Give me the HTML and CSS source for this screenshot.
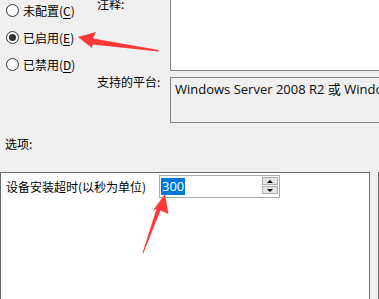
FILE: index.html
```html
<!DOCTYPE html>
<html lang="zh-CN">
<head>
<meta charset="utf-8">
<title>设备安装超时</title>
<link rel="stylesheet" href="styles.css">
</head>
<body>
<div class="page">
  <div class="top">
    <div class="radios">
      <div class="radio"><span class="dot"></span><span>未配置(<u>C</u>)</span></div>
      <div class="radio"><span class="dot checked"></span><span>已启用(<u>E</u>)</span></div>
      <div class="radio"><span class="dot"></span><span>已禁用(<u>D</u>)</span></div>
    </div>
    <div class="fields">
      <div class="label label-comment">注释:</div>
      <div class="box comment"></div>
      <div class="label label-platform">支持的平台:</div>
      <div class="box platform">Windows Server 2008 R2 或 Windows 7</div>
    </div>
  </div>
  <div class="options-label">选项:</div>
  <div class="bottom">
    <div class="panel">
      <div class="row">
        <span class="row-label">设备安装超时(以秒为单位)</span>
        <div class="spin-input">
          <span class="sel">300</span>
          <div class="spinner">
            <div class="btn"><span class="tri up"></span></div>
            <div class="btn"><span class="tri down"></span></div>
          </div>
        </div>
      </div>
    </div>
    <div class="help"></div>
  </div>
  <svg class="arrows" width="379" height="299" viewBox="0 0 379 299">
    <polygon fill="#ff3838" points="78,37 96,32 93,38.5 158.5,50 158.5,51.5 92.5,44.5 92,48"/>
    <polygon fill="#ff3838" points="165,194 168.5,214 160.5,210.5 143,254 142.5,253 156.5,209 153,210.5"/>
  </svg>
</div>
</body>
</html>
```
FILE: styles.css
```css
html, body {
  margin: 0;
  padding: 0;
}
body {
  background: #f0f0f0;
  font-family: "Noto Sans CJK SC", "Microsoft YaHei", sans-serif;
  font-size: 12px;
  line-height: 16px;
  color: #000;
  overflow: hidden;
}
.page {
  position: relative;
  width: 379px;
  height: 299px;
  overflow: hidden;
}
.top {
  display: flex;
}
.radios {
  width: 97px;
  margin-top: -3px;
  display: flex;
  flex-direction: column;
}
.radio {
  height: 27px;
  display: flex;
  align-items: center;
  gap: 4px;
  padding-left: 6px;
}
.radio u {
  text-decoration: underline;
  text-underline-offset: 2px;
}
.dot {
  width: 11px;
  height: 11px;
  border: 1px solid #333;
  border-radius: 50%;
  background: #fff;
  display: flex;
  align-items: center;
  justify-content: center;
  flex: none;
}
.dot.checked::after {
  content: "";
  width: 7px;
  height: 7px;
  border-radius: 50%;
  background: #333;
}
.fields {
  flex: 1;
  display: grid;
  grid-template-columns: 73px 1fr;
  row-gap: 6px;
  margin-top: -5px;
}
.label-comment {
  padding-top: 1px;
}
.label-platform {
  margin-top: -3px;
}
.box {
  border: 1px solid #828282;
  border-right: none;
}
.comment {
  height: 74px;
  background: #fff;
}
.platform {
  height: 42px;
  padding: 2px 0 0 4px;
  white-space: nowrap;
  overflow: hidden;
  font-family: "Open Sans", "Noto Sans CJK SC", sans-serif;
  font-size: 13px;
  line-height: 18px;
  color: #0a0a0a;
}
.options-label {
  margin-top: 13px;
  padding-left: 5px;
  height: 16px;
}
.bottom {
  display: flex;
  margin-top: 20px;
  gap: 8px;
}
.panel {
  width: 368px;
  height: 200px;
  background: #fff;
  border: 1px solid #6d6d6d;
  border-bottom: none;
}
.help {
  flex: 1;
  border-left: 1px solid #6d6d6d;
  border-top: 1px solid #6d6d6d;
  height: 200px;
  background: #f0f0f0;
}
.row {
  display: flex;
  align-items: center;
  padding: 2px 0 0 5px;
}
.row-label {
  width: 153px;
}
.spin-input {
  width: 119px;
  height: 21px;
  border: 1px solid #acacac;
  background: #fff;
  display: flex;
  align-items: center;
}
.sel {
  margin-left: 1px;
  background: #0078d7;
  color: #fff;
  font-family: "Open Sans", "Noto Sans", sans-serif;
  font-size: 13px;
  line-height: 17px;
  padding: 0 1px;
}
.spinner {
  margin-left: auto;
  margin-right: 1px;
  width: 16px;
  display: flex;
  flex-direction: column;
  gap: 1px;
  align-self: flex-start;
  margin-top: 1px;
}
.btn {
  height: 6px;
  border: 1px solid #adadad;
  background: #e5e5e5;
  display: flex;
  align-items: center;
  justify-content: center;
}
.tri {
  width: 0;
  height: 0;
  border-left: 3px solid transparent;
  border-right: 3px solid transparent;
}
.tri.up {
  border-bottom: 3px solid #000;
}
.tri.down {
  border-top: 3px solid #000;
}
.arrows {
  position: absolute;
  left: 0;
  top: 0;
  pointer-events: none;
}
```
